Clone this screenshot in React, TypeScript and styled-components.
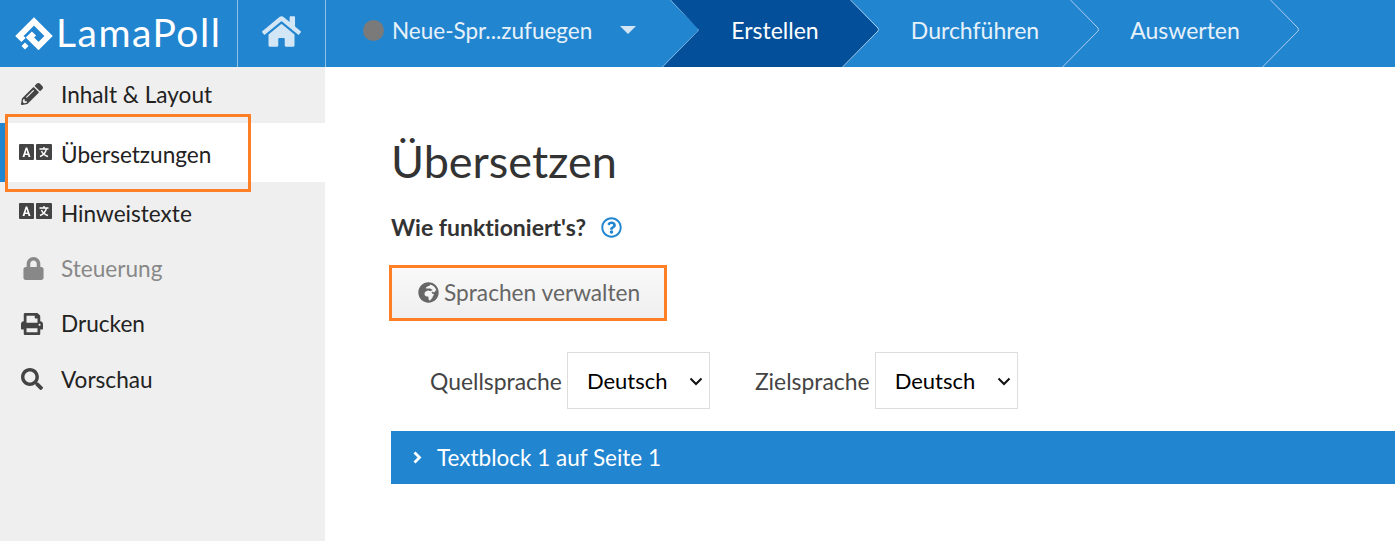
import React from "react";
import styled, { createGlobalStyle } from "styled-components";
import { FaHome, FaPencilAlt, FaLock, FaPrint, FaSearch, FaGlobeAfrica, FaRegQuestionCircle } from "react-icons/fa";

const GlobalStyle = createGlobalStyle`
  html, body {
    margin: 0;
    padding: 0;
    height: 100%;
    background: #fff;
    overflow: hidden;
    font-family: Lato, "Open Sans", sans-serif;
    font-variant-ligatures: none;
  }
  * { box-sizing: border-box; }
`;

function LogoMark() {
  return (
    <svg width="38" height="34" viewBox="0 0 38 34" fill="none">
      <path d="M8.5 23 L4.5 19 L19 4.5 L33.5 19 L23.5 29 L15 20.5 L19 16.5" stroke="#fff" strokeWidth="6" />
      <path d="M10 25.5 L13.5 29 L10 32.5 L6.5 29 Z" fill="#fff" />
    </svg>
  );
}

function TranslateIcon() {
  return (
    <TransIcon viewBox="0 0 33 16">
      <rect x="0" y="0" width="15" height="16" rx="1" fill="#444" />
      <rect x="17" y="0" width="16" height="16" rx="1" fill="#444" />
      <path d="M3.5 13 L6.7 3.5 H8.3 L11.5 13 H9.5 L9 11 H6 L5.5 13 Z M6.5 9.4 H8.5 L7.5 6 Z" fill="#fff" />
      <path d="M20.5 5 H29.5 M25 3 V5 M27.5 5 C26.5 9 24 11.5 21 12.5 M22.5 7 C23.5 9.5 26 11.5 29 12.5" stroke="#fff" strokeWidth="1.4" fill="none" />
    </TransIcon>
  );
}

function Chevron() {
  return (
    <ChevronSvg viewBox="0 0 38 67">
      <path d="M8.5 0 L36 28 Q37 30 36 31 L0.5 67" fill="none" stroke="#a9cdec" strokeWidth="1" />
    </ChevronSvg>
  );
}

function Language({ label }: { label: string }) {
  return (
    <>
      <FieldLabel>{label}</FieldLabel>
      <SelectBox>
        <LanguageSelect defaultValue="Deutsch">
          <option>Deutsch</option>
        </LanguageSelect>
        <SelectArrow viewBox="0 0 14 9">
          <path d="M1.5 1.5 L7 7 L12.5 1.5" fill="none" stroke="#111" strokeWidth="2" />
        </SelectArrow>
      </SelectBox>
    </>
  );
}

export default function App() {
  return (
    <Page>
      <GlobalStyle />
      <Header>
        <LogoCell>
          <LogoMark />
          <LogoText>LamaPoll</LogoText>
        </LogoCell>
        <HomeCell>
          <FaHome size={39} color="#d3e6f6" />
        </HomeCell>
        <ProjectStep>
          <StatusDot />
          <StepLabel>Neue-Spr...zufuegen</StepLabel>
          <Caret />
          <Chevron />
        </ProjectStep>
        <Step $width={180} $active>
          <ActiveShape viewBox="0 0 216 67">
            <path d="M8 0 H188 L216 30 L180 67 H0 L36 30 Z" fill="#034f9a" />
          </ActiveShape>
          <StepText>Erstellen</StepText>
          <Chevron />
        </Step>
        <Step $width={220}>
          <StepText>Durchführen</StepText>
          <Chevron />
        </Step>
        <Step $width={200}>
          <StepText>Auswerten</StepText>
          <Chevron />
        </Step>
      </Header>
      <Body>
        <Sidebar>
          <NavItem $height={56}>
            <IconSlot><FaPencilAlt size={22} /></IconSlot>
            Inhalt &amp; Layout
          </NavItem>
          <NavItem $height={59} $top={5} $active>
            <IconSlot $flush><TranslateIcon /></IconSlot>
            Übersetzungen
            <SideHighlight />
          </NavItem>
          <NavItem $height={60} $top={4}>
            <IconSlot $flush><TranslateIcon /></IconSlot>
            Hinweistexte
          </NavItem>
          <NavItem $height={55} $muted>
            <IconSlot $lock><FaLock size={23} /></IconSlot>
            Steuerung
          </NavItem>
          <NavItem $height={55}>
            <IconSlot><FaPrint size={22} /></IconSlot>
            Drucken
          </NavItem>
          <NavItem $height={56}>
            <IconSlot><FaSearch size={22} /></IconSlot>
            Vorschau
          </NavItem>
        </Sidebar>
        <Main>
          <Title>Übersetzen</Title>
          <HelpRow>
            <HelpLabel>Wie funktioniert's?</HelpLabel>
            <FaRegQuestionCircle size={21} color="#2285d0" />
          </HelpRow>
          <ManageButton>
            <FaGlobeAfrica size={21} color="#666" />
            Sprachen verwalten
          </ManageButton>
          <LanguageRow>
            <Language label="Quellsprache" />
            <Language label="Zielsprache" />
          </LanguageRow>
          <BlockBar>
            <svg width="9" height="13" viewBox="0 0 9 13">
              <path d="M1.5 1.5 L6.5 6.5 L1.5 11.5" fill="none" stroke="#fff" strokeWidth="2.8" />
            </svg>
            Textblock 1 auf Seite 1
          </BlockBar>
        </Main>
      </Body>
    </Page>
  );
}

const Page = styled.div`
  display: flex;
  flex-direction: column;
  height: 541px;
  width: 1395px;
  color: #333;
`;

const Header = styled.header`
  display: flex;
  height: 67px;
  flex-shrink: 0;
  background: #2285d0;
  color: #fff;
`;

const LogoCell = styled.div`
  display: flex;
  align-items: center;
  gap: 3px;
  width: 238px;
  padding-left: 15px;
  border-right: 1px solid #8fc0e8;
`;

const LogoText = styled.span`
  font-size: 39px;
  font-weight: 400;
  letter-spacing: 1.5px;
  color: #fff;
  margin-bottom: 4px;
`;

const HomeCell = styled.div`
  display: flex;
  align-items: center;
  justify-content: center;
  width: 88px;
  padding-bottom: 5px;
  border-right: 1px solid #8fc0e8;
`;

const ProjectStep = styled.div`
  position: relative;
  display: flex;
  align-items: center;
  width: 373px;
  padding: 0 0 7px 37px;
`;

const StatusDot = styled.span`
  width: 21px;
  height: 21px;
  border-radius: 50%;
  background: #7a7a7a;
  margin-right: 8px;
`;

const StepLabel = styled.span`
  font-size: 22.5px;
  color: #e6f1fa;
`;

const Caret = styled.span`
  width: 0;
  height: 0;
  margin-left: 28px;
  border-left: 8px solid transparent;
  border-right: 8px solid transparent;
  border-top: 8px solid #d3e6f6;
`;

const Step = styled.div<{ $width: number; $active?: boolean }>`
  position: relative;
  display: flex;
  align-items: center;
  justify-content: center;
  width: ${(p) => p.$width}px;
  padding-bottom: 7px;
  color: ${(p) => (p.$active ? "#fff" : "#e6f1fa")};
`;

const StepText = styled.span`
  position: relative;
  font-size: 23px;
  transform: translateX(-14px);
`;

const ActiveShape = styled.svg`
  position: absolute;
  top: 0;
  left: -36px;
  width: 216px;
  height: 67px;
`;

const ChevronSvg = styled.svg`
  position: absolute;
  top: 0;
  right: -1px;
  width: 38px;
  height: 67px;
`;

const Body = styled.div`
  display: flex;
  flex: 1;
  min-height: 0;
`;

const Sidebar = styled.nav`
  display: flex;
  flex-direction: column;
  width: 325px;
  flex-shrink: 0;
  background: #efefef;
`;

const NavItem = styled.div<{ $height: number; $top?: number; $active?: boolean; $muted?: boolean }>`
  position: relative;
  display: flex;
  align-items: center;
  gap: 9px;
  height: ${(p) => p.$height}px;
  padding-left: ${(p) => (p.$active ? 13 : 19)}px;
  padding-top: ${(p) => p.$top ?? 0}px;
  padding-bottom: 2px;
  font-size: 22.6px;
  color: ${(p) => (p.$muted ? "#888" : "#222")};
  background: ${(p) => (p.$active ? "#fff" : "transparent")};
  border-left: ${(p) => (p.$active ? "6px solid #2285d0" : "0")};
  svg { color: ${(p) => (p.$muted ? "#888" : "#444")}; }
`;

const IconSlot = styled.span<{ $flush?: boolean; $lock?: boolean }>`
  display: flex;
  align-items: center;
  justify-content: flex-start;
  width: 33px;
  padding-left: ${(p) => (p.$flush ? 0 : p.$lock ? 3 : 2)}px;
`;

const TransIcon = styled.svg`
  width: 33px;
  height: 16px;
  margin-bottom: 4px;
`;

const SideHighlight = styled.span`
  position: absolute;
  top: -9px;
  left: -1px;
  width: 246px;
  height: 78px;
  border: 3px solid #ff7f27;
`;

const Main = styled.main`
  display: flex;
  flex-direction: column;
  align-items: flex-start;
  flex: 1;
  padding: 64px 0 0 66px;
`;

const Title = styled.h1`
  margin: 0;
  font-size: 45px;
  line-height: 60px;
  font-weight: 400;
  color: #333;
`;

const HelpRow = styled.div`
  display: flex;
  align-items: center;
  gap: 15px;
  margin-top: 21px;
  height: 30px;
`;

const HelpLabel = styled.span`
  font-size: 23px;
  font-weight: 700;
  color: #333;
`;

const ManageButton = styled.button`
  display: flex;
  align-items: center;
  gap: 5px;
  width: 278px;
  height: 56px;
  margin: 23px 0 0 -2px;
  padding: 0 0 2px 26px;
  font-family: inherit;
  font-size: 22.7px;
  font-variant-ligatures: none;
  color: #666;
  background: linear-gradient(#f9f9f9, #efefef);
  border: 3px solid #ff7f27;
`;

const LanguageRow = styled.div`
  display: flex;
  align-items: center;
  gap: 5px;
  margin: 31px 0 0 39px;
`;

const FieldLabel = styled.label`
  font-size: 22.9px;
  color: #444;
  &:nth-of-type(2) { margin-left: 40px; }
`;

const SelectBox = styled.div`
  position: relative;
  width: 143px;
  height: 57px;
`;

const LanguageSelect = styled.select`
  appearance: none;
  width: 100%;
  height: 100%;
  padding: 0 19px;
  font-family: inherit;
  font-size: 22px;
  color: #000;
  background: #fff;
  border: 1px solid #ddd;
  border-radius: 0;
`;

const SelectArrow = styled.svg`
  position: absolute;
  top: 25px;
  right: 7px;
  width: 14px;
  height: 9px;
  pointer-events: none;
`;

const BlockBar = styled.div`
  display: flex;
  align-items: center;
  gap: 15px;
  align-self: stretch;
  height: 53px;
  margin-top: 22px;
  padding-left: 22px;
  font-size: 22.5px;
  color: #fff;
  background: #2285d0;
`;
